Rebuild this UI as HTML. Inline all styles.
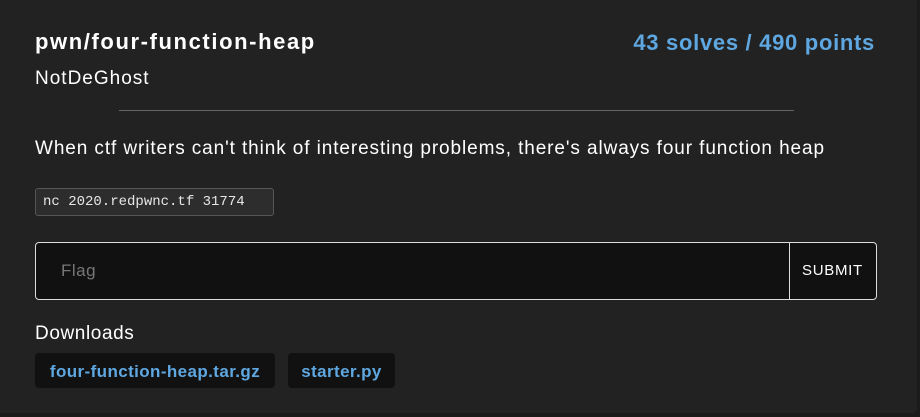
<!DOCTYPE html><html><head><style>
body{margin:0;width:920px;height:417px;background:#1b1b1b;font-family:"Liberation Sans",sans-serif;overflow:hidden}
.card{position:absolute;left:0;top:0;width:917px;height:413px;background:#222;border-radius:0 0 4px 0}
.a{position:absolute;white-space:nowrap}
</style></head><body><div class="card">
<div class="a" style="left:35px;top:29px;font-size:22px;font-weight:bold;color:#fff;letter-spacing:1.6px">pwn/four-function-heap</div>
<div class="a" style="right:42px;top:30px;font-size:22px;font-weight:bold;color:#5ea7e0;letter-spacing:0.7px">43 solves / 490 points</div>
<div class="a" style="left:35px;top:68px;font-size:19px;color:#fff;letter-spacing:1px">NotDeGhost</div>
<div class="a" style="left:119px;top:110px;width:675px;height:1px;background:#666"></div>
<div class="a" style="left:35px;top:138px;font-size:19px;color:#fff;letter-spacing:0.9px">When ctf writers can't think of interesting problems, there's always four function heap</div>
<div class="a" style="left:35px;top:188px;width:237px;height:26px;border:1px solid #555;border-radius:3px;background:#2d2d2d;font-family:'Liberation Mono',monospace;font-size:14px;color:#e6e6e6;line-height:26px;text-indent:7px">nc 2020.redpwnc.tf 31774</div>
<div class="a" style="left:35px;top:242px;width:840px;height:56px;border:1px solid #ddd;border-radius:4px;background:#111"></div>
<div class="a" style="left:61px;top:261px;font-size:17px;color:#777;letter-spacing:0.5px">Flag</div>
<div class="a" style="left:789px;top:243px;width:1px;height:56px;background:#ddd"></div>
<div class="a" style="left:802px;top:262px;font-size:15px;color:#fff;letter-spacing:0.7px">SUBMIT</div>
<div class="a" style="left:35px;top:323px;font-size:19px;color:#fff;letter-spacing:0.6px">Downloads</div>
<div class="a" style="left:35px;top:353px;width:240px;height:35px;border-radius:4px;background:#111;color:#5ea7e0;font-weight:bold;font-size:17px;line-height:37px;text-align:center;letter-spacing:0.4px">four-function-heap.tar.gz</div>
<div class="a" style="left:288px;top:353px;width:107px;height:35px;border-radius:4px;background:#111;color:#5ea7e0;font-weight:bold;font-size:17px;line-height:37px;text-align:center;letter-spacing:0.4px">starter.py</div>
</div></body></html>
